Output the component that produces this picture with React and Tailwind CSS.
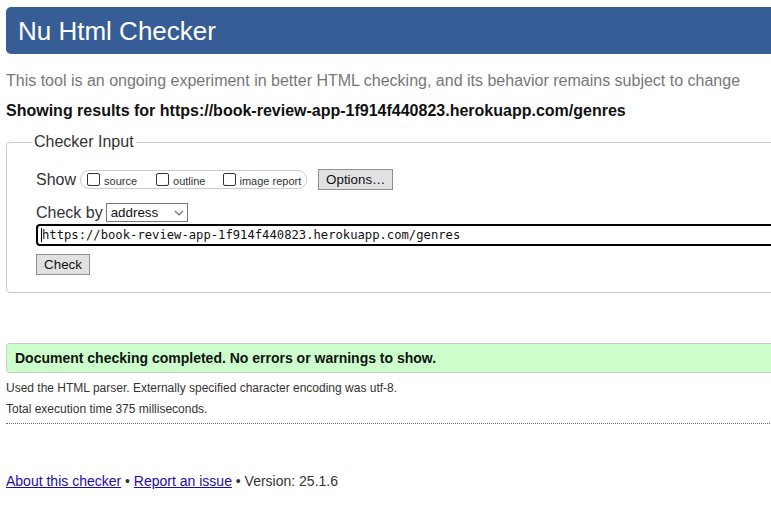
export default function App() {
  return (
    <div className="w-[771px] h-[515px] overflow-hidden bg-white text-[#222] font-['Liberation_Sans',Arial,sans-serif]">
      <div className="w-[900px] pl-[6px]">
        {/* Header */}
        <div className="mt-[7px] h-[47px] flex items-center pl-[12px] bg-[#365d95] rounded-l-[5px]">
          <h1 className="text-[26px] leading-none text-white">Nu Html Checker</h1>
        </div>

        <p className="mt-[18px] text-[16px] leading-[18px] text-[#777]">
          This tool is an ongoing experiment in better HTML checking, and its behavior remains subject to change
        </p>
        <p className="mt-[12px] text-[16px] leading-[18px] font-bold text-[#111]">
          Showing results for https://book-review-app-1f914f440823.herokuapp.com/genres
        </p>

        {/* Checker input */}
        <fieldset className="mt-[13px] border border-[#ccc] rounded-[4px]">
          <legend className="ml-[25px] px-[2px] text-[16px] leading-[18px] text-[#333]">Checker Input</legend>

          <div className="pl-[29px] pb-[17px]">
            <div className="mt-[18px] flex items-center h-[21px]">
              <span className="text-[16px] leading-[18px] text-[#333]">Show</span>
              <div className="ml-[4px] h-[19px] flex items-center border border-[#ccc] rounded-[9px] pl-[6px] pr-[5px] text-[11px] text-[#333]">
                <span className="w-[13px] h-[13px] border border-[#333] rounded-[2px] bg-white" />
                <span className="ml-[4px] mt-[3px]">source</span>
                <span className="ml-[19px] w-[13px] h-[13px] border border-[#333] rounded-[2px] bg-white" />
                <span className="ml-[4px] mt-[3px]">outline</span>
                <span className="ml-[18px] w-[13px] h-[13px] border border-[#333] rounded-[2px] bg-white" />
                <span className="ml-[3px] mt-[3px]">image report</span>
              </div>
              <div className="ml-[11px] w-[75px] h-[21px] flex items-center justify-center bg-[#e1e1e1] border border-[#8f8f8f] text-[13.33px] text-[#111]">
                Options…
              </div>
            </div>

            <div className="mt-[13px] flex items-center h-[19px]">
              <span className="text-[16px] leading-[18px] text-[#333]">Check by</span>
              <div className="ml-[3px] w-[82px] h-[19px] flex items-center justify-between border border-[#767676] pl-[4px] pr-[3px] text-[13.33px] text-[#111]">
                <span>address</span>
                <svg width="10" height="6" viewBox="0 0 10 6" fill="none" stroke="#6b6b6b" strokeWidth="1.2">
                  <path d="M1 1l4 4 4-4" />
                </svg>
              </div>
            </div>

            <div className="mt-[2px] h-[22px] flex items-center border-2 border-black rounded-[4px] pl-[3px] text-[12.2px] font-['DejaVu_Sans_Mono','Liberation_Mono',monospace] text-[#111]">
              <span className="w-px h-[14px] bg-black" />
              <span>https://book-review-app-1f914f440823.herokuapp.com/genres</span>
            </div>

            <div className="mt-[8px] w-[54px] h-[21px] flex items-center justify-center bg-[#e1e1e1] border border-[#8f8f8f] text-[13.33px] text-[#111]">
              Check
            </div>
          </div>
        </fieldset>

        {/* Result */}
        <div className="mt-[50px] h-[30px] flex items-center pl-[8px] bg-[#ccffcc] border border-[#ccc] rounded-l-[3px] text-[14px] font-bold text-[#111]">
          Document checking completed. No errors or warnings to show.
        </div>
        <p className="mt-[8px] text-[12px] leading-[14px] text-[#333]">
          Used the HTML parser. Externally specified character encoding was utf-8.
        </p>
        <p className="mt-[7px] text-[12px] leading-[14px] text-[#333]">
          Total execution time 375 milliseconds.
        </p>
        <div className="mt-[7px] border-t border-dotted border-[#666]" />

        {/* Footer */}
        <p className="mt-[49px] text-[14px] leading-[16px] text-[#333]">
          <a href="#" className="text-[#1a0dab] underline">About this checker</a>
          {" • "}
          <a href="#" className="text-[#1a0dab] underline">Report an issue</a>
          {" • Version: 25.1.6"}
        </p>
      </div>
    </div>
  );
}
